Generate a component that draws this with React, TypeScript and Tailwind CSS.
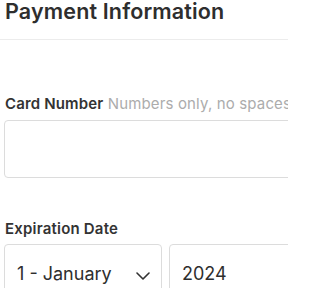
import React from 'react';

const App = () => {
  return (
    <div className="w-[288px] h-[288px] overflow-hidden bg-white font-['Inter',sans-serif] text-[#2e2e2e]">
      <div className="w-[480px]">
        {/* Header */}
        <div className="h-[40px] border-b border-[#ececec] px-[5px]">
          <h2 className="text-[21.5px] font-semibold leading-[22px] tracking-[0.15px]">Payment Information</h2>
        </div>

        {/* Card number */}
        <div className="pt-[54px] px-[4px]">
          <label className="block text-[15px] leading-[20px] mb-[6px] px-[1px] tracking-[0.15px]">
            <span className="font-semibold text-[#333]">Card Number</span>{' '}
            <span className="text-[#acacac]">Numbers only, no spaces</span>
          </label>
          <div className="h-[58px] rounded-[4px] border border-[#dcdcdc] bg-white"></div>
        </div>

        {/* Expiration */}
        <div className="pt-[41px] px-[4px]">
          <label className="block text-[15px] font-semibold leading-[20px] mb-[5px] px-[1px] tracking-[0.2px] text-[#333]">
            Expiration Date
          </label>
          <div className="flex gap-[7px]">
            <div className="w-[158px] h-[58px] rounded-[4px] border border-[#dcdcdc] flex items-center justify-between pl-[12px] pr-[11px]">
              <span className="text-[18px]">1 - January</span>
              <svg width="14" height="8" viewBox="0 0 14 8" fill="none" stroke="#333" strokeWidth="1.6" strokeLinecap="round" strokeLinejoin="round" className="mt-[6px]">
                <path d="M1 1l6 6 6-6" />
              </svg>
            </div>
            <div className="w-[200px] h-[58px] rounded-[4px] border border-[#dcdcdc] flex items-center pl-[12px]">
              <span className="text-[18px]">2024</span>
            </div>
          </div>
        </div>
      </div>
    </div>
  );
};

export default App;
